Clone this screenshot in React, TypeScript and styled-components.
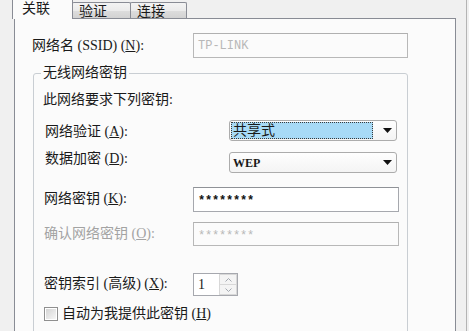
import React from 'react';
import styled, { createGlobalStyle } from 'styled-components';

const GlobalStyle = createGlobalStyle`
    html, body {
        margin: 0;
        padding: 0;
        background: #f0f0f0;
    }

    body {
        font-family: "Liberation Serif", "Noto Sans CJK SC", serif;
        font-size: 14px;
        color: #1a1a1a;
    }
`;

const Window = styled.div`
    box-sizing: border-box;
    width: 467px;
    height: 331px;
    overflow: hidden;
    background: #f0f0f0;
    border-right: 1px solid #b4b4b4;
`;

const TabBar = styled.div`
    box-sizing: border-box;
    display: flex;
    align-items: flex-end;
    height: 18px;
    padding-left: 12px;
`;

interface TabProps {
    $active?: boolean;
    $width: number;
}

const Tab = styled.div<TabProps>`
    box-sizing: border-box;
    position: relative;
    width: ${({ $width }) => $width}px;
    border: 1px solid #898c95;
    border-bottom: none;
    border-radius: 2px 2px 0 0;
    line-height: 15px;
    white-space: nowrap;

    ${({ $active }) => $active ? `
        height: 21px;
        margin-bottom: -1px;
        padding: 2px 0 0 9px;
        background: #fbfbfb;
        z-index: 1;
    ` : `
        height: 16px;
        margin-left: -1px;
        padding: 1px 0 0 6px;
        background: linear-gradient(#f3f3f3 0%, #ebebeb 50%, #dddddd 51%, #d2d2d2 100%);
    `}
`;

const Panel = styled.div`
    box-sizing: border-box;
    margin-left: 14px;
    width: 442px;
    height: 330px;
    border: 1px solid #898c95;
    background: #fbfbfb;
    padding: 14px 0 0 17px;
`;

const Row = styled.div<{ $top?: number; $height: number }>`
    display: flex;
    align-items: center;
    margin-top: ${({ $top }) => $top ?? 0}px;
    height: ${({ $height }) => $height}px;
`;

interface LabelProps {
    $width: number;
    $indent?: number;
    $nudge?: number;
    $disabled?: boolean;
}

const Label = styled.div<LabelProps>`
    box-sizing: border-box;
    width: ${({ $width }) => $width}px;
    padding-left: ${({ $indent }) => $indent ?? 0}px;
    padding-top: ${({ $nudge }) => ($nudge && $nudge > 0 ? $nudge * 2 : 0)}px;
    padding-bottom: ${({ $nudge }) => ($nudge && $nudge < 0 ? -$nudge * 2 : 0)}px;
    line-height: 16px;
    white-space: nowrap;
    color: ${({ $disabled }) => $disabled ? '#a3a3a3' : '#1a1a1a'};

    u {
        text-underline-offset: 1px;
    }
`;

const TextBox = styled.div<{ $width: number; $height: number; $disabled?: boolean }>`
    box-sizing: border-box;
    width: ${({ $width }) => $width}px;
    height: ${({ $height }) => $height}px;
    border: 1px solid ${({ $disabled }) => $disabled ? '#b8b8b8' : '#a6a8ae'};
    border-top-color: ${({ $disabled }) => $disabled ? '#b0b0b0' : '#8f9297'};
    background: ${({ $disabled }) => $disabled ? '#fbfbfb' : '#ffffff'};
    padding-left: 4px;
    display: flex;
    align-items: center;
    font-family: "Liberation Mono", monospace;
    font-size: 12px;
    color: ${({ $disabled }) => $disabled ? '#b8b8b8' : '#111'};
`;

const Secret = styled.span<{ $disabled?: boolean }>`
    font-weight: ${({ $disabled }) => $disabled ? 'normal' : 'bold'};
    letter-spacing: -0.2px;
    padding-top: 3px;
`;

const GroupBox = styled.fieldset`
    box-sizing: border-box;
    width: 375px;
    min-width: 0;
    margin: 6px 0 0 1px;
    padding: 0 0 60px 0;
    border: 1px solid #c9ced3;
    border-radius: 3px;
`;

const Legend = styled.legend`
    margin-left: 7px;
    padding: 0 2px;
    line-height: 18px;
    font-size: 14px;
`;

const GroupBody = styled.div`
    padding-left: 9px;
`;

const Intro = styled.div`
    margin-top: 9px;
    line-height: 18px;
`;

const Combo = styled.div`
    box-sizing: border-box;
    display: flex;
    align-items: center;
    width: 168px;
    height: 21px;
    padding-left: 1px;
    border: 1px solid #acacac;
    border-radius: 3px;
    background: linear-gradient(#fefefe, #f4f4f4);
`;

const ComboValue = styled.div<{ $focused?: boolean }>`
    box-sizing: border-box;
    width: 142px;
    height: 17px;
    padding-left: 1px;
    line-height: 15px;
    white-space: nowrap;
    border: 1px ${({ $focused }) => $focused ? 'dotted #3a3a3a' : 'solid transparent'};
    background: ${({ $focused }) => $focused ? '#a7daf6' : 'transparent'};
`;

const ComboLatin = styled.span`
    font-family: "Liberation Serif", serif;
    font-weight: bold;
    font-size: 12px;
`;

const ComboArrow = styled.div`
    flex: 1;
    display: flex;
    justify-content: center;
    padding-left: 5px;
`;

const Spin = styled.div`
    box-sizing: border-box;
    display: flex;
    width: 45px;
    height: 23px;
    border: 1px solid #a6a8ae;
    background: #fff;
`;

const SpinText = styled.div`
    flex: 1;
    padding-left: 4px;
    line-height: 21px;
    font-size: 14px;
`;

const SpinButtons = styled.div`
    display: flex;
    flex-direction: column;
    width: 18px;
`;

const SpinButton = styled.div`
    flex: 1;
    display: flex;
    align-items: center;
    justify-content: center;
    border: 1px solid #d8d8d8;
    background: #f4f4f4;

    & + & {
        border-top: none;
    }
`;

const CheckBox = styled.div`
    box-sizing: border-box;
    width: 14px;
    height: 14px;
    margin-left: 1px;
    margin-right: 4px;
    border: 1px solid #8f8f8f;
    padding: 1px;
    background: #fff;

    &::after {
        content: '';
        display: block;
        width: 100%;
        height: 100%;
        background: linear-gradient(135deg, #d4d4d4, #f6f6f6);
    }
`;

const DropArrow = () => (
    <svg width="9" height="5" viewBox="0 0 9 5">
        <polygon points="0,0 9,0 4.5,5" fill="#111" />
    </svg>
);

const Chevron = ({ up }: { up?: boolean }) => (
    <svg width="7" height="4" viewBox="0 0 7 4">
        <polyline
            points={up ? '0.5,3.5 3.5,0.5 6.5,3.5' : '0.5,0.5 3.5,3.5 6.5,0.5'}
            fill="none"
            stroke="#a4a9b0"
            strokeWidth="1"
        />
    </svg>
);

export default function App() {
    return (
        <>
            <GlobalStyle />
            <Window>
                <TabBar>
                    <Tab $active $width={61}>关联</Tab>
                    <Tab $width={59}>验证</Tab>
                    <Tab $width={57}>连接</Tab>
                </TabBar>

                <Panel>
                    <Row $height={25}>
                        <Label $width={161}>网络名 (SSID) (<u>N</u>):</Label>
                        <TextBox $width={215} $height={25} $disabled>TP-LINK</TextBox>
                    </Row>

                    <GroupBox>
                        <Legend>无线网络密钥</Legend>
                        <GroupBody>
                            <Intro>此网络要求下列密钥:</Intro>

                            <Row $top={11} $height={21}>
                                <Label $width={186} $indent={2} $nudge={1}>网络验证 (<u>A</u>):</Label>
                                <Combo>
                                    <ComboValue $focused>共享式</ComboValue>
                                    <ComboArrow><DropArrow /></ComboArrow>
                                </Combo>
                            </Row>

                            <Row $top={11} $height={21}>
                                <Label $width={186} $indent={2} $nudge={-4}>数据加密 (<u>D</u>):</Label>
                                <Combo>
                                    <ComboValue><ComboLatin>WEP</ComboLatin></ComboValue>
                                    <ComboArrow><DropArrow /></ComboArrow>
                                </Combo>
                            </Row>

                            <Row $top={14} $height={25}>
                                <Label $width={150} $indent={1} $nudge={-1}>网络密钥 (<u>K</u>):</Label>
                                <TextBox $width={206} $height={25}><Secret>********</Secret></TextBox>
                            </Row>

                            <Row $top={10} $height={24}>
                                <Label $width={150} $indent={1} $disabled>确认网络密钥 (<u>O</u>):</Label>
                                <TextBox $width={206} $height={24} $disabled><Secret $disabled>********</Secret></TextBox>
                            </Row>

                            <Row $top={27} $height={23}>
                                <Label $width={150} $indent={1} $nudge={-1}>密钥索引 (高级) (<u>X</u>):</Label>
                                <Spin>
                                    <SpinText>1</SpinText>
                                    <SpinButtons>
                                        <SpinButton><Chevron up /></SpinButton>
                                        <SpinButton><Chevron /></SpinButton>
                                    </SpinButtons>
                                </Spin>
                            </Row>

                            <Row $top={11} $height={14}>
                                <CheckBox />
                                <Label $width={200}>自动为我提供此密钥 (<u>H</u>)</Label>
                            </Row>
                        </GroupBody>
                    </GroupBox>
                </Panel>
            </Window>
        </>
    );
}
